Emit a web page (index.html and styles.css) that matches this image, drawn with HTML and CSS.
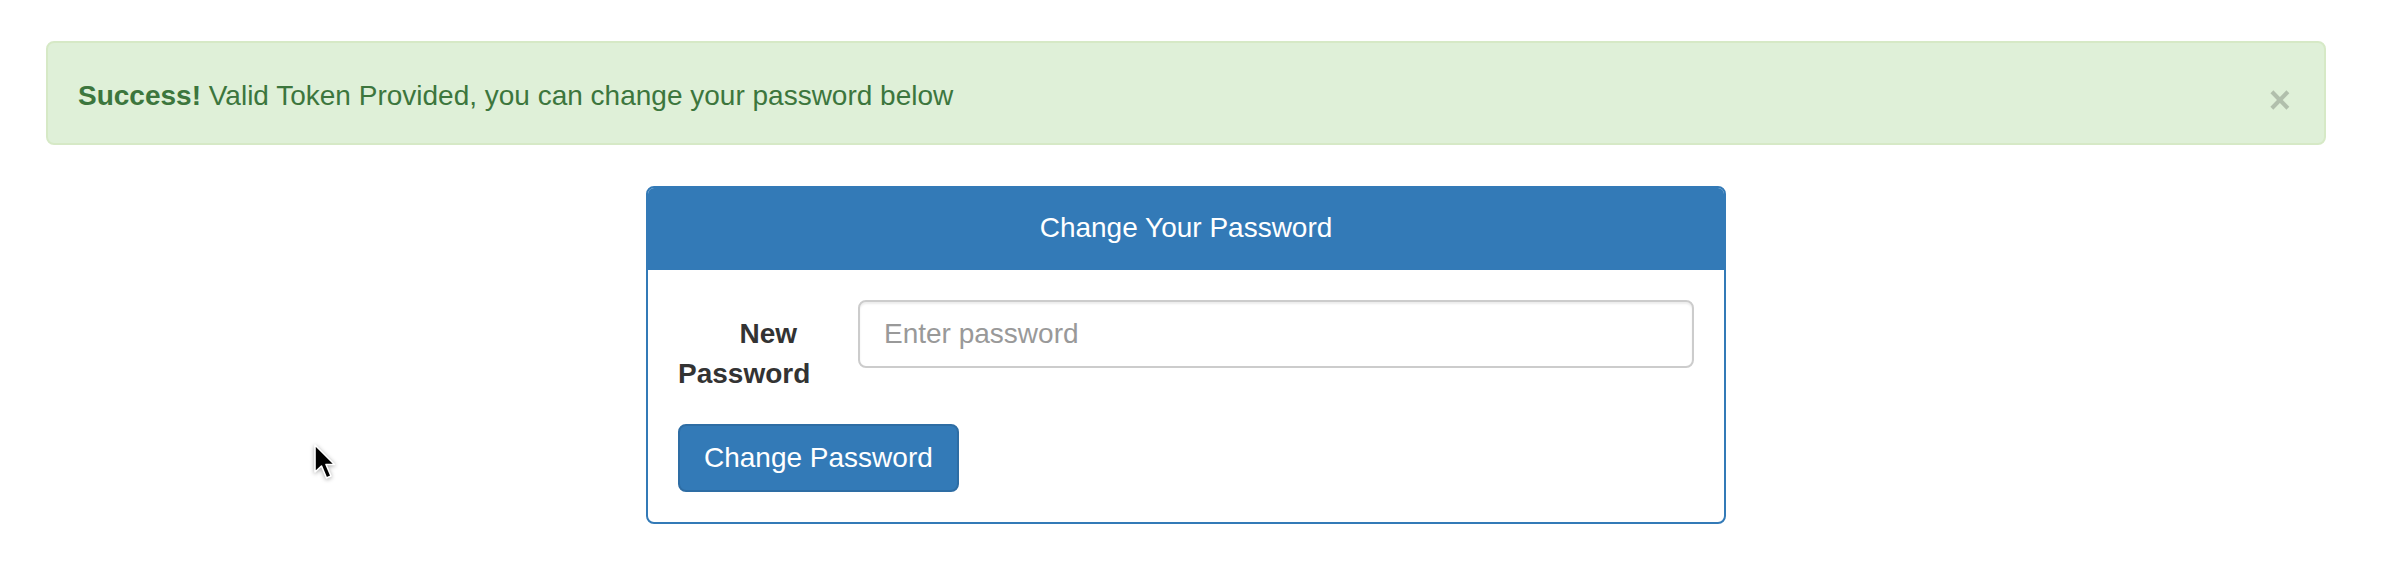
FILE: index.html
```html
<!DOCTYPE html>
<html lang="en">
<head>
<meta charset="utf-8">
<title>Change Your Password</title>
<link rel="stylesheet" href="styles.css">
</head>
<body>
<div class="page">
  <div class="alert">
    <p class="alert-text"><strong>Success!</strong> Valid Token Provided, you can change your password below</p>
    <span class="close">&times;</span>
  </div>
  <div class="panel">
    <div class="panel-heading">Change Your Password</div>
    <div class="panel-body">
      <div class="form-row">
        <label class="control-label" for="pw"><span class="line first">New</span><span class="line">Password</span></label>
        <input class="form-control" id="pw" type="password" placeholder="Enter password">
      </div>
      <button class="btn" type="button">Change Password</button>
    </div>
  </div>
</div>
<svg class="cursor" width="26" height="42" viewBox="0 0 26 42">
  <path d="M2 2 L2 29 L8.5 23 L13.5 35 L18 33 L13 21.5 L21.5 21.5 Z" fill="#000" stroke="#fff" stroke-width="1.6" stroke-linejoin="round"/>
</svg>
</body>
</html>
```

FILE: styles.css
```css
* { box-sizing: border-box; }

html, body {
  margin: 0;
  background: #fff;
}

body {
  font-family: "Liberation Sans", Arial, sans-serif;
  font-size: 28px;
  line-height: 40px;
  color: #333;
  position: relative;
  min-height: 582px;
}

.page {
  padding: 41px 72px 0 46px;
}

.alert {
  display: flex;
  align-items: flex-start;
  height: 104px;
  background: #dff0d8;
  border: 2px solid #d6e9c6;
  border-radius: 8px;
  color: #3c763d;
  padding: 33px 33px 27px 30px;
  margin-bottom: 41px;
}

.alert-text {
  margin: 0;
  flex: 1;
  line-height: 40px;
}

.alert-text strong {
  font-weight: bold;
}

.close {
  font-size: 38px;
  font-weight: bold;
  line-height: 40px;
  height: 40px;
  margin-top: 4px;
  color: #000;
  opacity: 0.2;
}

.panel {
  width: 1080px;
  margin: 0 auto;
  border: 2px solid #337ab7;
  border-radius: 8px;
  overflow: hidden;
}

.panel-heading {
  background: #337ab7;
  color: #fff;
  text-align: center;
  padding: 20px 30px;
  border-bottom: 2px solid #337ab7;
}

.panel-body {
  padding: 30px;
}

.form-row {
  display: flex;
  align-items: flex-start;
  gap: 50px;
  margin-bottom: 30px;
}

.control-label {
  width: 130px;
  flex: none;
  text-align: right;
  font-weight: bold;
  padding-top: 14px;
}

.control-label .line {
  display: block;
}

.control-label .first {
  padding-right: 11px;
}

.form-control {
  flex: 1;
  height: 68px;
  border: 2px solid #ccc;
  border-radius: 8px;
  padding: 0 24px;
  font-family: inherit;
  font-size: 28px;
  color: #555;
  background: #fff;
  box-shadow: inset 0 2px 2px rgba(0, 0, 0, 0.075);
}

.form-control::placeholder {
  color: #999;
}

.btn {
  display: inline-block;
  font-family: inherit;
  font-size: 28px;
  line-height: 40px;
  color: #fff;
  background: #337ab7;
  border: 2px solid #2e6da4;
  border-radius: 8px;
  padding: 12px 24px;
}

.cursor {
  position: absolute;
  left: 313px;
  top: 443px;
  filter: drop-shadow(0 1px 2px rgba(0, 0, 0, 0.35));
}
```
